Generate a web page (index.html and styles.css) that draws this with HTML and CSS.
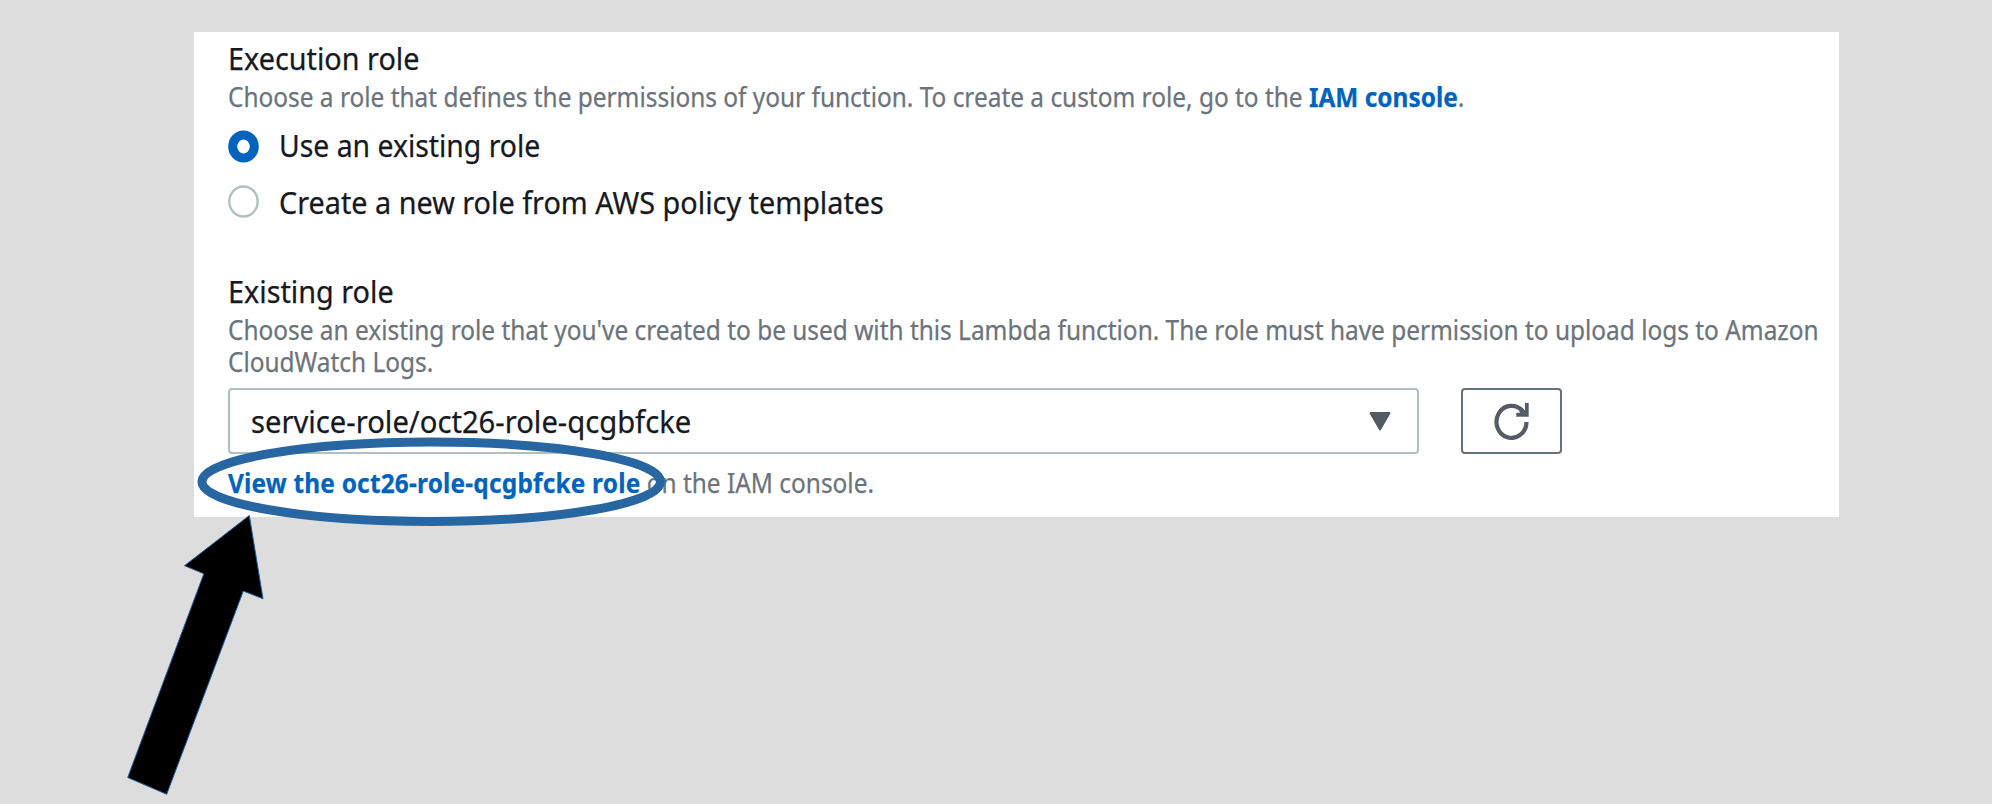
FILE: index.html
```html
<!DOCTYPE html>
<html lang="en">
<head>
<meta charset="utf-8">
<title>Execution role</title>
<link rel="stylesheet" href="styles.css">
</head>
<body>
<main class="panel">
  <section class="field">
    <h2 class="label"><span class="fit fit-label">Execution role</span></h2>
    <p class="hint hint-intro"><span class="fit fit-hint">Choose a role that defines the permissions of your function. To create a custom role, go to the <a class="link">IAM console</a>.</span></p>
    <div class="options">
      <div class="option">
        <svg class="radio" viewBox="0 0 31 33"><ellipse cx="15.5" cy="16.5" rx="10.8" ry="11.4" fill="#fff" stroke="#0064be" stroke-width="9"/></svg>
        <span class="fit fit-first">Use an existing role</span>
      </div>
      <div class="option">
        <svg class="radio radio-off" viewBox="0 0 31 33"><ellipse cx="15.5" cy="16.5" rx="14.2" ry="15" fill="#fff" stroke="#b0bfbf" stroke-width="2.3"/></svg>
        <span class="fit fit-label">Create a new role from AWS policy templates</span>
      </div>
    </div>
  </section>
  <section class="field">
    <h2 class="label"><span class="fit fit-label">Existing role</span></h2>
    <p class="hint hint-intro"><span class="fit fit-hint">Choose an existing role that you've created to be used with this Lambda function. The role must have permission to upload logs to Amazon<br>CloudWatch Logs.</span></p>
    <div class="controls">
      <div class="select">
        <span class="fit fit-value">service-role/oct26-role-qcgbfcke</span>
        <svg class="caret" viewBox="0 0 22 19"><path d="M1.5 1H20.5L11 17.5Z" fill="#545b64" stroke="#545b64" stroke-width="2" stroke-linejoin="round"/></svg>
      </div>
      <div class="refresh">
        <svg class="refresh-icon" viewBox="0 0 36 38"><path d="M32.5 20A15 16 0 1 1 28.5 9" fill="none" stroke="#545b64" stroke-width="4.2"/><path d="M31 1H34.7V14.7H22.3V10.8H26L25 8L28 5.500L31 8.500Z" fill="#545b64"/></svg>
      </div>
    </div>
    <p class="hint role-link"><span class="fit fit-hint"><a class="link role-name">View the oct26-role-qcgbfcke role</a> on the IAM console.</span></p>
  </section>
</main>
<svg class="annotations" viewBox="0 0 1992 804">
  <ellipse cx="431.2" cy="481.7" rx="229.3" ry="39.7" fill="none" stroke="#2866a2" stroke-width="9"/>
  <path d="M249.3 515.5L184.5 565.7L203.8 573.8L127.7 777.5L166.7 794.3L243.3 591L263 598.8Z" fill="#000" stroke="#1f5f9f" stroke-width="1"/>
</svg>
</body>
</html>
```
FILE: styles.css
```css
* { box-sizing: border-box; }

body {
  margin: 0;
  height: 804px;
  overflow: hidden;
  padding: 32px 153px 0 194px;
  background: #ddd;
  font-family: "Noto Sans", sans-serif;
  color: #16191f;
}

.panel {
  height: 485px;
  padding: 8px 0 0 34px;
  background: #fff;
}

.label, .hint { margin: 0; font-weight: 400; }
.label { font-size: 30px; line-height: 38px; height: 40px; }
.hint { font-size: 27px; line-height: 32px; color: #6b747c; }
.hint-intro { padding-top: 1px; }
.link { font-weight: 700; color: #0064be; }
.role-name { letter-spacing: 0.22px; }

/* Slightly condensed text, one factor per kind of line. */
.fit {
  display: inline-block;
  white-space: nowrap;
  transform-origin: 0 50%;
  -webkit-text-stroke: 0.25px currentColor;
}
.fit-label { transform: scaleX(0.96); }
.fit-hint { transform: scaleX(0.904); }
.fit-first { transform: scaleX(0.945); }
.fit-value { transform: scaleX(0.973); }

.options { padding-top: 14px; font-size: 30px; line-height: 38px; }
.option { display: flex; align-items: flex-start; gap: 20px; height: 57px; }
.radio { width: 31px; height: 33px; margin-top: 3px; flex: none; }
.radio-off { margin-top: 1px; }

.field + .field { margin-top: 32px; }

.controls { display: flex; gap: 42px; margin-top: 10px; }
.select {
  display: flex;
  align-items: center;
  justify-content: space-between;
  width: 1191px;
  height: 66px;
  padding: 1px 26px 0 21px;
  border: 2px solid #b0bfbf;
  border-radius: 4px;
  font-size: 30px;
  line-height: 38px;
}
.caret { width: 22px; height: 19px; }
.refresh {
  display: flex;
  align-items: center;
  justify-content: center;
  width: 101px;
  height: 66px;
  border: 2px solid #687078;
  border-radius: 4px;
}
.refresh-icon { width: 36px; height: 38px; }
.role-link { margin-top: 13px; }

.annotations { position: absolute; left: 0; top: 0; width: 1992px; height: 804px; }
```
